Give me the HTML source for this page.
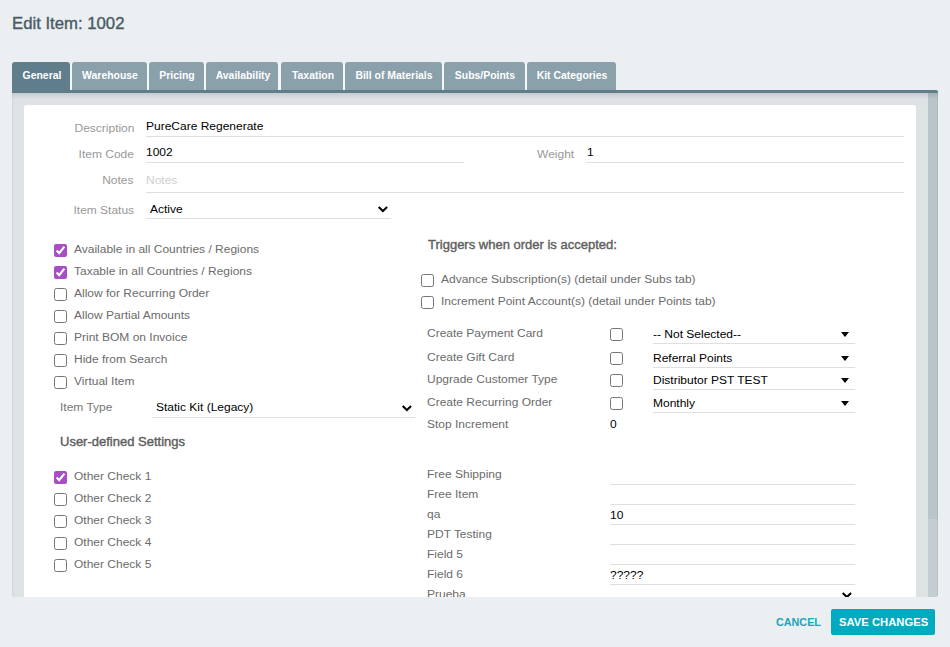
<!DOCTYPE html><html><head><meta charset="utf-8"><style>
*{box-sizing:border-box;margin:0;padding:0}
html,body{width:950px;height:647px;overflow:hidden;background:#eceff1;font-family:"Liberation Sans",sans-serif}
div,span{position:absolute;white-space:nowrap}
.t{font-size:11.7px;line-height:12px;height:12px;transform:scaleX(1.026);transform-origin:0 0}
.r{transform-origin:100% 0}
.lbl{color:#999}
.val{color:#000}
.ck{color:#6b6b6b}
.rl{color:#6b6b6b}
.ul{height:1px;background:#dfdfdf}
input{position:absolute;margin:0;width:13px;height:13px;accent-color:#a64ec5}
.sc{transform-origin:0 0}
</style></head><body>
<div style="left:12px;top:16px;font-size:16px;line-height:16px;color:#4a5a65;-webkit-text-stroke:0.35px #4a5a65;transform:scaleX(1.045);transform-origin:0 0">Edit Item: 1002</div>
<div style="left:70px;top:63px;width:546px;height:27px;background:#f4f6f7"></div>
<div style="left:12px;top:62px;width:58px;height:31px;background:#607d8b;border-radius:3px 3px 0 0"></div>
<div class="tabt" style="left:41.5px;top:69px;font-weight:bold;font-size:11.6px;line-height:12px;color:#fff;transform:translateX(-50%) scaleX(0.9)">General</div>
<div style="left:72px;top:62px;width:74.69999999999999px;height:28px;background:#8aa0ab;border-radius:3px 3px 0 0"></div>
<div class="tabt" style="left:109.85px;top:69px;font-weight:bold;font-size:11.6px;line-height:12px;color:#fff;transform:translateX(-50%) scaleX(0.9)">Warehouse</div>
<div style="left:149.3px;top:62px;width:54.5px;height:28px;background:#8aa0ab;border-radius:3px 3px 0 0"></div>
<div class="tabt" style="left:177.05px;top:69px;font-weight:bold;font-size:11.6px;line-height:12px;color:#fff;transform:translateX(-50%) scaleX(0.9)">Pricing</div>
<div style="left:206.3px;top:62px;width:72.19999999999999px;height:28px;background:#8aa0ab;border-radius:3px 3px 0 0"></div>
<div class="tabt" style="left:242.9px;top:69px;font-weight:bold;font-size:11.6px;line-height:12px;color:#fff;transform:translateX(-50%) scaleX(0.9)">Availability</div>
<div style="left:281.3px;top:62px;width:61.39999999999998px;height:28px;background:#8aa0ab;border-radius:3px 3px 0 0"></div>
<div class="tabt" style="left:312.5px;top:69px;font-weight:bold;font-size:11.6px;line-height:12px;color:#fff;transform:translateX(-50%) scaleX(0.9)">Taxation</div>
<div style="left:345.2px;top:62px;width:96.60000000000002px;height:28px;background:#8aa0ab;border-radius:3px 3px 0 0"></div>
<div class="tabt" style="left:394.0px;top:69px;font-weight:bold;font-size:11.6px;line-height:12px;color:#fff;transform:translateX(-50%) scaleX(0.9)">Bill of Materials</div>
<div style="left:444.4px;top:62px;width:80.60000000000002px;height:28px;background:#8aa0ab;border-radius:3px 3px 0 0"></div>
<div class="tabt" style="left:485.2px;top:69px;font-weight:bold;font-size:11.6px;line-height:12px;color:#fff;transform:translateX(-50%) scaleX(0.9)">Subs/Points</div>
<div style="left:527.3px;top:62px;width:88.30000000000007px;height:28px;background:#8aa0ab;border-radius:3px 3px 0 0"></div>
<div class="tabt" style="left:571.95px;top:69px;font-weight:bold;font-size:11.6px;line-height:12px;color:#fff;transform:translateX(-50%) scaleX(0.9)">Kit Categories</div>
<div style="left:12px;top:90px;width:926px;height:3px;background:#607d8b;border-radius:0 2px 0 0"></div>
<div style="left:12px;top:93px;width:926px;height:504px;background:#dde2e5;border-radius:0 0 3px 3px;box-shadow:inset 2px 0 2px -1px rgba(0,0,0,0.06)"></div>
<div style="left:928px;top:93px;width:10px;height:504px;background:#c4cdd2;border-radius:0 0 3px 0"></div>
<div style="left:928px;top:93px;width:10px;height:426px;background:#b9c5cb"></div>
<div style="left:937px;top:93px;width:1px;height:503px;background:rgba(0,0,0,0.06)"></div>
<div style="left:12px;top:93px;width:926px;height:6px;background:linear-gradient(rgba(0,0,0,0.10),rgba(0,0,0,0))"></div>
<div style="left:24px;top:105px;width:892px;height:492px;background:#fff;border-radius:2px 2px 0 0"></div>
<div class="t r lbl" style="right:816px;top:122px;">Description</div>
<div class="t val" style="left:146px;top:120px;">PureCare Regenerate</div>
<div class="ul" style="left:146px;top:136px;width:758px"></div>
<div class="t r lbl" style="right:816px;top:148px;">Item Code</div>
<div class="t val" style="left:146px;top:146px;">1002</div>
<div class="ul" style="left:146px;top:162px;width:318px"></div>
<div class="t r lbl" style="right:376px;top:148px;">Weight</div>
<div class="t val" style="left:587px;top:146px;">1</div>
<div class="ul" style="left:586px;top:162px;width:318px"></div>
<div class="t r lbl" style="right:816px;top:174px;">Notes</div>
<div class="t lbl" style="left:146px;top:174px;color:#cfcfcf">Notes</div>
<div class="ul" style="left:146px;top:192px;width:758px"></div>
<div class="t r lbl" style="right:816px;top:204px;">Item Status</div>
<div class="t val" style="left:150px;top:203px;">Active</div>
<div class="ul" style="left:146px;top:218px;width:245px"></div>
<svg style="position:absolute;left:377px;top:205px" width="13" height="9"><polyline points="1.7,2.1 5.9,6.0 10.1,2.1" fill="none" stroke="#000" stroke-width="2.1" stroke-linecap="butt" stroke-linejoin="miter"/></svg>
<input type="checkbox" style="left:54px;top:244px" checked>
<div class="t ck" style="left:74px;top:243px;">Available in all Countries / Regions</div>
<input type="checkbox" style="left:54px;top:266px" checked>
<div class="t ck" style="left:74px;top:265px;">Taxable in all Countries / Regions</div>
<input type="checkbox" style="left:54px;top:288px">
<div class="t ck" style="left:74px;top:287px;">Allow for Recurring Order</div>
<input type="checkbox" style="left:54px;top:310px">
<div class="t ck" style="left:74px;top:309px;">Allow Partial Amounts</div>
<input type="checkbox" style="left:54px;top:332px">
<div class="t ck" style="left:74px;top:331px;">Print BOM on Invoice</div>
<input type="checkbox" style="left:54px;top:354px">
<div class="t ck" style="left:74px;top:353px;">Hide from Search</div>
<input type="checkbox" style="left:54px;top:376px">
<div class="t ck" style="left:74px;top:375px;">Virtual Item</div>
<div class="t lbl" style="left:60px;top:401px;color:#777">Item Type</div>
<div class="t val" style="left:156px;top:401px;">Static Kit (Legacy)</div>
<div class="ul" style="left:152px;top:417px;width:263px"></div>
<svg style="position:absolute;left:401px;top:404px" width="13" height="9"><polyline points="1.7,2.1 5.9,6.0 10.1,2.1" fill="none" stroke="#000" stroke-width="2.1" stroke-linecap="butt" stroke-linejoin="miter"/></svg>
<div style="left:60px;top:435px;font-size:13px;line-height:13px;color:#5e5e5e;-webkit-text-stroke:0.4px #5e5e5e">User-defined Settings</div>
<input type="checkbox" style="left:54px;top:471px" checked>
<div class="t ck" style="left:74px;top:470px;">Other Check 1</div>
<input type="checkbox" style="left:54px;top:493px">
<div class="t ck" style="left:74px;top:492px;">Other Check 2</div>
<input type="checkbox" style="left:54px;top:515px">
<div class="t ck" style="left:74px;top:514px;">Other Check 3</div>
<input type="checkbox" style="left:54px;top:537px">
<div class="t ck" style="left:74px;top:536px;">Other Check 4</div>
<input type="checkbox" style="left:54px;top:559px">
<div class="t ck" style="left:74px;top:558px;">Other Check 5</div>
<div style="left:428px;top:238px;font-size:13px;line-height:13px;color:#5e5e5e;-webkit-text-stroke:0.4px #5e5e5e">Triggers when order is accepted:</div>
<input type="checkbox" style="left:421px;top:274px">
<div class="t ck" style="left:441px;top:273px;">Advance Subscription(s) (detail under Subs tab)</div>
<input type="checkbox" style="left:421px;top:296px">
<div class="t ck" style="left:441px;top:295px;">Increment Point Account(s) (detail under Points tab)</div>
<div class="t rl" style="left:427px;top:327px;">Create Payment Card</div>
<input type="checkbox" style="left:610px;top:328px">
<div class="t val" style="left:653px;top:328px;">-- Not Selected--</div>
<div class="ul" style="left:653px;top:343px;width:202px"></div>
<div style="left:841px;top:332px;width:0;height:0;border-left:4px solid transparent;border-right:4px solid transparent;border-top:5px solid #000"></div>
<div class="t rl" style="left:427px;top:351px;">Create Gift Card</div>
<input type="checkbox" style="left:610px;top:352px">
<div class="t val" style="left:653px;top:352px;">Referral Points</div>
<div class="ul" style="left:653px;top:367px;width:202px"></div>
<div style="left:841px;top:356px;width:0;height:0;border-left:4px solid transparent;border-right:4px solid transparent;border-top:5px solid #000"></div>
<div class="t rl" style="left:427px;top:373px;">Upgrade Customer Type</div>
<input type="checkbox" style="left:610px;top:374px">
<div class="t val" style="left:653px;top:374px;">Distributor PST TEST</div>
<div class="ul" style="left:653px;top:389px;width:202px"></div>
<div style="left:841px;top:378px;width:0;height:0;border-left:4px solid transparent;border-right:4px solid transparent;border-top:5px solid #000"></div>
<div class="t rl" style="left:427px;top:396px;">Create Recurring Order</div>
<input type="checkbox" style="left:610px;top:397px">
<div class="t val" style="left:653px;top:397px;">Monthly</div>
<div class="ul" style="left:653px;top:412px;width:202px"></div>
<div style="left:841px;top:401px;width:0;height:0;border-left:4px solid transparent;border-right:4px solid transparent;border-top:5px solid #000"></div>
<div class="t rl" style="left:427px;top:418px;">Stop Increment</div>
<div class="t val" style="left:610px;top:418px;">0</div>
<div class="t rl" style="left:427px;top:468px;">Free Shipping</div>
<div class="ul" style="left:610px;top:484px;width:245px"></div>
<div class="t rl" style="left:427px;top:488px;">Free Item</div>
<div class="ul" style="left:610px;top:504px;width:245px"></div>
<div class="t rl" style="left:427px;top:508px;">qa</div>
<div class="t val" style="left:610px;top:509px;">10</div>
<div class="ul" style="left:610px;top:524px;width:245px"></div>
<div class="t rl" style="left:427px;top:528px;">PDT Testing</div>
<div class="ul" style="left:610px;top:544px;width:245px"></div>
<div class="t rl" style="left:427px;top:548px;">Field 5</div>
<div class="ul" style="left:610px;top:564px;width:245px"></div>
<div class="t rl" style="left:427px;top:568px;">Field 6</div>
<div class="t val" style="left:610px;top:569px;">?????</div>
<div class="ul" style="left:610px;top:584px;width:245px"></div>
<div class="t rl" style="left:427px;top:588px;">Prueba</div>
<svg style="position:absolute;left:841px;top:591px" width="13" height="9"><polyline points="1.7,2.1 5.9,6.0 10.1,2.1" fill="none" stroke="#000" stroke-width="2.1" stroke-linecap="butt" stroke-linejoin="miter"/></svg>
<div style="left:0;top:597px;width:950px;height:50px;background:#eceff1"></div>
<div style="left:776px;top:616px;font-weight:bold;font-size:11.6px;line-height:12px;color:#1aa5bd;transform:scaleX(0.93);transform-origin:0 0">CANCEL</div>
<div style="left:831px;top:609px;width:104px;height:26px;background:#00abc1;border-radius:2px"></div>
<div style="left:839px;top:616px;font-weight:bold;font-size:11.6px;line-height:12px;color:#fff;transform:scaleX(0.97);transform-origin:0 0">SAVE CHANGES</div>
</body></html>
